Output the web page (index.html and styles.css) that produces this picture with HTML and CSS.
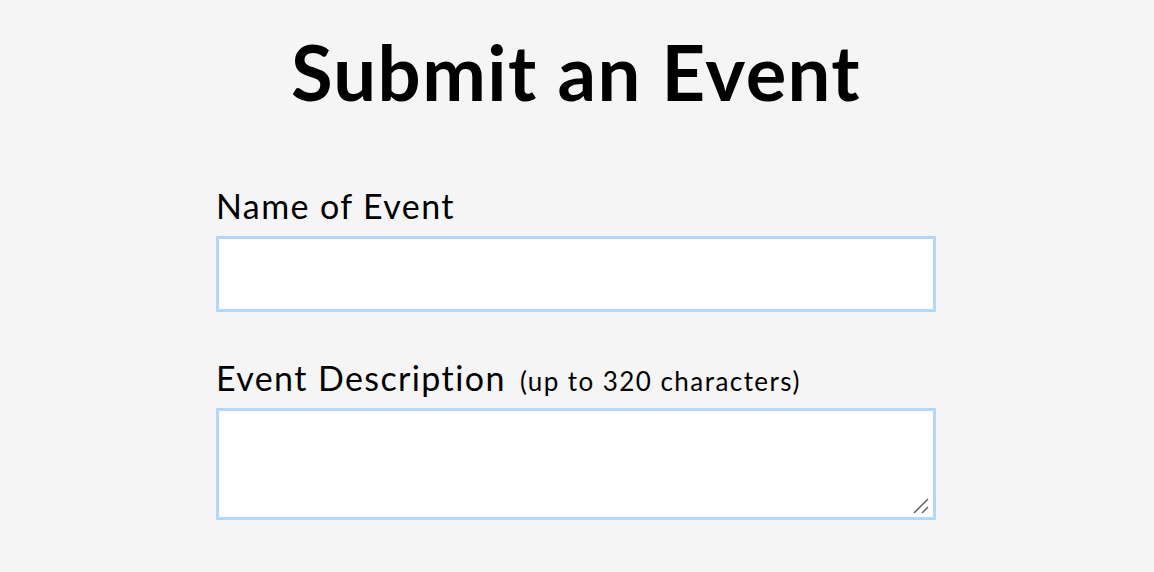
FILE: index.html
```html
<!DOCTYPE html>
<html lang="en">
<head>
<meta charset="utf-8">
<title>Submit an Event</title>
<link rel="stylesheet" href="styles.css">
</head>
<body>
<main class="page">
  <h1 class="title">Submit an Event</h1>
  <form class="form">
    <div class="field">
      <label class="label" for="name">Name of Event</label>
      <input class="input" id="name" type="text">
    </div>
    <div class="field">
      <label class="label" for="desc">Event Description <span class="hint">(up to 320 characters)</span></label>
      <div class="textarea-wrap">
        <textarea class="textarea" id="desc" maxlength="320"></textarea>
        <svg class="grip" width="18" height="18" viewBox="0 0 18 18" aria-hidden="true">
          <path d="M1 16 L15 2 M9 16 L15 10" stroke="#6b6b6b" stroke-width="1.6" fill="none"/>
        </svg>
      </div>
    </div>
  </form>
</main>
</body>
</html>
```

FILE: styles.css
```css
html, body {
  margin: 0;
  padding: 0;
  background: #f5f5f5;
}
body {
  font-family: Lato, "Noto Sans", sans-serif;
  color: #000;
}
.page {
  display: flex;
  flex-direction: column;
  align-items: center;
  padding-top: 26px;
  padding-right: 2px;
}
.title {
  margin: 0;
  font-size: 76px;
  font-weight: 700;
  line-height: 92px;
  letter-spacing: 1.4px;
}
.form {
  width: 720px;
  margin-top: 66px;
  display: flex;
  flex-direction: column;
  gap: 44px;
}
.field {
  display: flex;
  flex-direction: column;
}
.label {
  font-size: 34px;
  line-height: 44px;
  font-weight: 400;
  letter-spacing: 1.4px;
  margin-bottom: 8px;
}
.hint {
  font-size: 26px;
  line-height: 1;
  letter-spacing: 1.45px;
  margin-left: 4px;
}
.input, .textarea {
  box-sizing: border-box;
  display: block;
  width: 720px;
  border: 3px solid #b3d6fc;
  background: #fff;
  margin: 0;
  outline: none;
  font: inherit;
}
.input {
  height: 76px;
}
.textarea-wrap {
  position: relative;
}
.textarea {
  height: 112px;
  resize: none;
}
.grip {
  position: absolute;
  right: 5px;
  bottom: 5px;
  pointer-events: none;
}
```
